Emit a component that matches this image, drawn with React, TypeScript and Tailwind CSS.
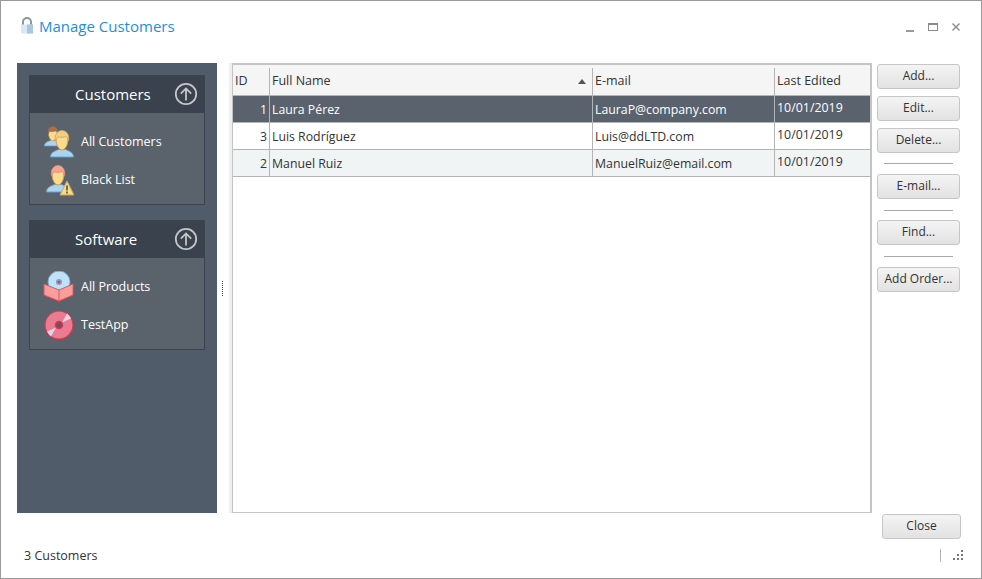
import React from "react";

const font = "[font-family:'Open_Sans','Noto_Sans',sans-serif]";

const customers = [
  { id: 1, name: "Laura Pérez", email: "LauraP@company.com", edited: "10/01/2019" },
  { id: 3, name: "Luis Rodríguez", email: "Luis@ddLTD.com", edited: "10/01/2019" },
  { id: 2, name: "Manuel Ruiz", email: "ManuelRuiz@email.com", edited: "10/01/2019" },
];

const UpCircle = () => (
  <svg className="mb-[2px]" width="24" height="24" viewBox="0 0 24 24" fill="none" stroke="#c4c6c8" strokeWidth="1.8">
    <circle cx="12" cy="12" r="10.2" />
    <path d="M12 18.500V6.500M6.800 11.600L12 6.400l5.200 5.200" />
  </svg>
);

const Person = ({ hair, line }: { hair: string; line: string }) => (
  <g>
    <path d="M0.500 27c0-5 5-6 8-7.500h7c3 1.500 8 2.500 8 7.500z" fill="#a9d4f2" stroke="#6d9cc4" />
    <path d="M6 9c0 6 3 11 6 11s6-5 6-11-3-8-6-8-6 2-6 8z" fill="#fbdc8e" stroke="#c99d5a" />
    <path d="M5.500 11c-1.500-6 2-10.500 6.500-10.500s8 4.500 6.500 10.500c-.5-2-1-3.500-2-4.500-3 1-6 1-8.500 .5-1 1-2 2-2.500 4z" fill={hair} stroke={line} strokeWidth="0.7" />
  </g>
);

const AllCustomersIcon = () => (
  <svg width="32" height="32" viewBox="0 0 32 32">
    <g transform="translate(2 0) scale(0.74)">
      <Person hair="#a8724e" line="#7e5238" />
    </g>
    <g transform="translate(8 4)">
      <Person hair="#f2cd83" line="#c99d5a" />
    </g>
  </svg>
);

const BlackListIcon = () => (
  <svg width="32" height="32" viewBox="0 0 32 32">
    <g transform="translate(4 1)">
      <Person hair="#f5a58c" line="#d9836c" />
    </g>
    <path d="M25 17l7 14H18z" fill="#f8da84" stroke="#c9a75c" />
    <path d="M25 21.500v5M25 27.500v2" stroke="#55504a" strokeWidth="1.600" />
  </svg>
);

const ProductsIcon = () => (
  <svg width="32" height="32" viewBox="0 0 32 32">
    <circle cx="17" cy="11" r="11" fill="#bfe2f8" stroke="#7aa3cc" />
    <circle cx="17" cy="11" r="3" fill="#7f9fc8" />
    <circle cx="17" cy="11" r="1.300" fill="#d8404f" />
    <path d="M2 13l15 6 14-6v11l-14 6-15-6z" fill="#fb9d9b" stroke="#e0565c" />
    <path d="M17 19v11" stroke="#e0565c" />
  </svg>
);

const DiscIcon = () => (
  <svg width="32" height="32" viewBox="0 0 32 32">
    <circle cx="17" cy="16" r="14" fill="#ea7b90" stroke="#cf3a50" strokeWidth="1.200" />
    <path d="M20 13.500L25 4.500a13.500 13.500 0 0 1 4 5z" fill="#f3d6dd" />
    <path d="M14 18.500L9 27.500a13.500 13.500 0 0 1-4-5z" fill="#e2d3e8" />
    <circle cx="17" cy="16" r="3.500" fill="#7a4a5e" stroke="#cf3a50" strokeWidth="1.500" />
  </svg>
);

const Lock = () => (
  <svg width="14" height="17" viewBox="0 0 14 17">
    <path d="M3 8V5a4 4 0 0 1 8 0v3" fill="none" stroke="#8a97a3" strokeWidth="2" />
    <rect x="1" y="7.500" width="12" height="9" fill="#dbe7f2" />
    <rect x="7" y="7.500" width="6" height="9" fill="#a9c7e2" />
  </svg>
);

function NavSection({ title, items }: { title: string; items: { label: string; icon: React.ReactNode }[] }) {
  return (
    <div className="w-[176px] border border-[#3a434e] bg-[#5a626c]">
      <div className="flex h-[37px] items-center bg-[#39424d] pr-[6px]">
        <span className="flex-1 pl-[45px] text-[15px] text-white">{title}</span>
        <UpCircle />
      </div>
      <div className="flex flex-col gap-[6px] pl-[12px] pt-[13px] pb-[8px]">
        {items.map((item) => (
          <div key={item.label} className="flex h-[32px] items-center gap-[7px]">
            {item.icon}
            <span className="text-[12.500px] text-white">{item.label}</span>
          </div>
        ))}
      </div>
    </div>
  );
}

function ActionButton({ label, width = "w-[83px]" }: { label: string; width?: string }) {
  return (
    <button className={`${width} h-[25px] shrink-0 rounded-[3px] border border-[#c6c6c6] bg-gradient-to-b from-[#f4f4f4] to-[#e2e2e2] pb-[1px] text-[12px] text-[#333]`}>
      {label}
    </button>
  );
}

const Separator = ({ spacing }: { spacing: string }) => <div className={`mx-auto h-px w-[69px] bg-[#a8a8a8] ${spacing}`} />;

export default function App() {
  return (
    <div className={`${font} flex h-[579px] w-[982px] flex-col border border-[#9a9a9a] bg-white text-[#333]`}>
      {/* title bar */}
      <div className="flex h-[62px] shrink-0 items-start pl-[19px] pr-[20px] pt-[16px]">
        <Lock />
        <span className="ml-[5px] text-[15px] leading-[19px] text-[#1b8fe0]">Manage Customers</span>
        <div className="ml-auto mt-[5px] flex items-center">
          <div className="mt-[8px] h-[2px] w-[8px] bg-[#9a9a9a]" />
          <div className="ml-[14px] h-[8px] w-[10px] border border-[#8a8a8a] border-t-2" />
          <svg className="ml-[13px]" width="10" height="10" viewBox="0 0 10 10" stroke="#8a8a8a" strokeWidth="1.400">
            <path d="M1.500 1.500l7 7M8.500 1.500l-7 7" />
          </svg>
        </div>
      </div>

      <div className="flex min-h-0 flex-1 pl-[16px]">
        {/* sidebar */}
        <div className="flex h-[450px] w-[200px] shrink-0 flex-col gap-[15px] bg-[#515c6a] px-[12px] py-[12px]">
          <NavSection
            title="Customers"
            items={[
              { label: "All Customers", icon: <AllCustomersIcon /> },
              { label: "Black List", icon: <BlackListIcon /> },
            ]}
          />
          <NavSection
            title="Software"
            items={[
              { label: "All Products", icon: <ProductsIcon /> },
              { label: "TestApp", icon: <DiscIcon /> },
            ]}
          />
        </div>

        {/* splitter */}
        <div className="flex h-[450px] w-[12px] shrink-0 items-center justify-center">
          <div className="mr-[2px] h-[15px] border-l border-dotted border-[#444]" />
        </div>
        <div className="h-[450px] w-[3px] shrink-0 bg-[#efefef]" />

        {/* grid */}
        <div className="flex h-[450px] w-[640px] shrink-0 flex-col border border-[#c4c4c4] border-t-2 border-r-2">
          <div className="flex h-[31px] shrink-0 border-b border-[#b4b4b4] bg-[#f5f5f5] pt-[3px] text-[12.500px]">
            <div className="flex w-[37px] items-center border-r border-[#b4b4b4] pl-[2px]">ID</div>
            <div className="flex w-[323px] items-center border-r border-[#b4b4b4] pl-[2px]">
              <span className="flex-1">Full Name</span>
              <div className="mr-[6px] h-0 w-0 border-x-[4px] border-b-[5px] border-x-transparent border-b-[#555]" />
            </div>
            <div className="flex w-[182px] items-center border-r border-[#b4b4b4] pl-[2px]">E-mail</div>
            <div className="flex flex-1 items-center pl-[2px]">Last Edited</div>
          </div>
          {customers.map((c, i) => (
            <div
              key={c.id}
              className={`flex h-[27px] shrink-0 border-b border-[#b4b4b4] text-[12.300px] ${
                i === 0 ? "bg-[#59626d] text-white" : i === 2 ? "bg-[#f0f4f5]" : "bg-white"
              }`}
            >
              <div className="flex w-[37px] items-center justify-end border-r border-[#b4b4b4] pr-[2px] pt-[3px]">{c.id}</div>
              <div className="flex w-[323px] items-center border-r border-[#b4b4b4] pl-[2px] pt-[3px]">{c.name}</div>
              <div className="flex w-[182px] items-center border-r border-[#b4b4b4] pl-[2px] pt-[3px]">{c.email}</div>
              <div className="flex-1 pl-[2px] pt-[3px] text-[12.400px]">{c.edited}</div>
            </div>
          ))}
        </div>

        {/* actions */}
        <div className="ml-[5px] flex w-[83px] shrink-0 flex-col">
          <div className="mt-px flex flex-col gap-[7px]">
            <ActionButton label="Add..." />
            <ActionButton label="Edit..." />
            <ActionButton label="Delete..." />
          </div>
          <Separator spacing="mt-[10px] mb-[10px]" />
          <ActionButton label="E-mail..." />
          <Separator spacing="mt-[11px] mb-[9px]" />
          <ActionButton label="Find..." />
          <Separator spacing="mt-[11px] mb-[10px]" />
          <ActionButton label="Add Order..." />
        </div>
      </div>

      <div className="flex shrink-0 justify-end pr-[20px]">
        <ActionButton label="Close" width="w-[79px]" />
      </div>

      {/* status bar */}
      <div className="flex h-[39px] shrink-0 items-center pb-[6px] pl-[23px] pr-[17px] text-[12.500px]">
        <span className="mt-[2px]">3 Customers</span>
        <div className="ml-auto h-[13px] w-px bg-[#b4b4b4]" />
        <svg className="ml-[12px]" width="11" height="11" viewBox="0 0 11 11" fill="#777">
          <rect x="8" y="0" width="2" height="2" />
          <rect x="4" y="4" width="2" height="2" />
          <rect x="8" y="4" width="2" height="2" />
          <rect x="0" y="8" width="2" height="2" />
          <rect x="4" y="8" width="2" height="2" />
          <rect x="8" y="8" width="2" height="2" />
        </svg>
      </div>
    </div>
  );
}
